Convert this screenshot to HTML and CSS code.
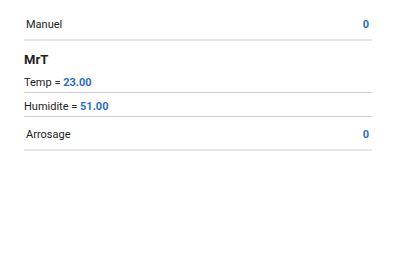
FILE: index.html
```html
<!DOCTYPE html>
<html lang="fr">
<head>
    <meta charset="UTF-8">
    <meta name="viewport" content="width=device-width, initial-scale=1.0">
    <title>MrT</title>
    <link rel="stylesheet" href="styles.css">
</head>
<body>
    <div class="list">
        <!-- Mode -->
        <div class="item item-switch first">
            <span>Manuel</span>
            <span class="value">0</span>
        </div>

        <!-- Capteur -->
        <div class="group-title">MrT</div>
        <div class="item item-sensor top">Temp = <span class="value">23.00</span></div>
        <div class="item item-sensor">Humidite = <span class="value">51.00</span></div>

        <!-- Arrosage -->
        <div class="item item-switch last">
            <span>Arrosage</span>
            <span class="value">0</span>
        </div>
    </div>
</body>
</html>
```
FILE: styles.css
```css
body {
    font-family: Roboto, "Liberation Sans", Arial, sans-serif;
    font-size: 11px;
    color: #222;
    margin: 0;
    padding: 0;
    background-color: #fff;
}
.list {
    margin: 0 28px 0 24px;
}
.item {
    line-height: 14px;
}
.item-switch {
    display: flex;
    justify-content: space-between;
    padding: 18px 3px 7px 2px;
    border-bottom: 2px solid #e6e6e6;
}
.item-switch.last {
    padding-top: 11px;
}
.item-sensor {
    padding: 7px 0 2px 0;
    border-bottom: 1px solid #cfcfcf;
}
.item-sensor.top {
    padding-top: 9px;
}
.group-title {
    font-weight: bold;
    font-size: 13px;
    line-height: 15px;
    padding-top: 11px;
}
.value {
    color: #2d6cc0;
    font-weight: bold;
}
```
